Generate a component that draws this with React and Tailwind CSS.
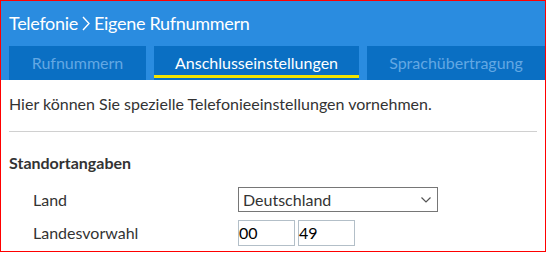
const TABS = [
  { label: 'Rufnummern', w: 'w-[137px]', active: false },
  { label: 'Anschlusseinstellungen', w: 'w-[205px]', active: true },
  { label: 'Sprachübertragung', w: 'flex-1', active: false },
];

export default function App() {
  return (
    <div className="w-[546px] h-[252px] border border-[#ff0000] bg-white overflow-hidden font-['Lato',sans-serif] text-[#333]">
      <div className="bg-[#2a8ce0] pl-2">
        <div className="h-[45px] pt-[10px] flex items-start text-[18px] leading-[24px] text-white tracking-[-0.3px]">
          <span>Telefonie</span>
          <svg width="14" height="24" viewBox="0 0 14 24" className="mx-[1px]">
            <path d="M4 6 L10 12.5 L4 19" fill="none" stroke="white" strokeWidth="1.4" />
          </svg>
          <span>Eigene Rufnummern</span>
        </div>
        <div className="flex gap-2">
          {TABS.map(t => (
            <div key={t.label}
              className={`${t.w} h-[34px] bg-[#0a6fc3] flex flex-col items-center`}>
              <div className={`h-[29px] pt-[7px] leading-[20px] text-[16px] ${t.active ? 'text-white' : 'text-[#63a8e3]'}`}>
                {t.label}
              </div>
              {t.active && <div className="w-full h-[3px] bg-[#f2e400]" />}
            </div>
          ))}
        </div>
      </div>

      <div className="px-2">
        <p className="pt-[14px] pb-[17px] text-[16px] leading-[20px]">
          Hier können Sie spezielle Telefonieeinstellungen vornehmen.
        </p>
        <div className="h-px bg-[#d0d0d0]" />
        <div className="pt-[21px] text-[16px] leading-[20px] font-bold">Standortangaben</div>

        <div className="mt-[14px] flex items-center">
          <div className="w-[229px] pl-6 text-[16px]">Land</div>
          <div className="w-[200px] h-[25px] border border-[#767676] flex items-center justify-between px-1 text-[16px]">
            <span>Deutschland</span>
            <svg width="12" height="8" viewBox="0 0 12 8" className="mr-[1px]">
              <path d="M1.5 1.5 L6 6 L10.5 1.5" fill="none" stroke="#555" strokeWidth="1.2" />
            </svg>
          </div>
        </div>

        <div className="mt-[8px] flex items-center">
          <div className="w-[229px] pl-6 text-[16px]">Landesvorwahl</div>
          <div className="flex gap-[3px]">
            <div className="w-[57px] h-[26px] border border-[#b3bfc8] flex items-center text-[16px] text-black">00</div>
            <div className="w-[57px] h-[26px] border border-[#b3bfc8] flex items-center text-[16px] text-black">49</div>
          </div>
        </div>
      </div>
    </div>
  );
}
